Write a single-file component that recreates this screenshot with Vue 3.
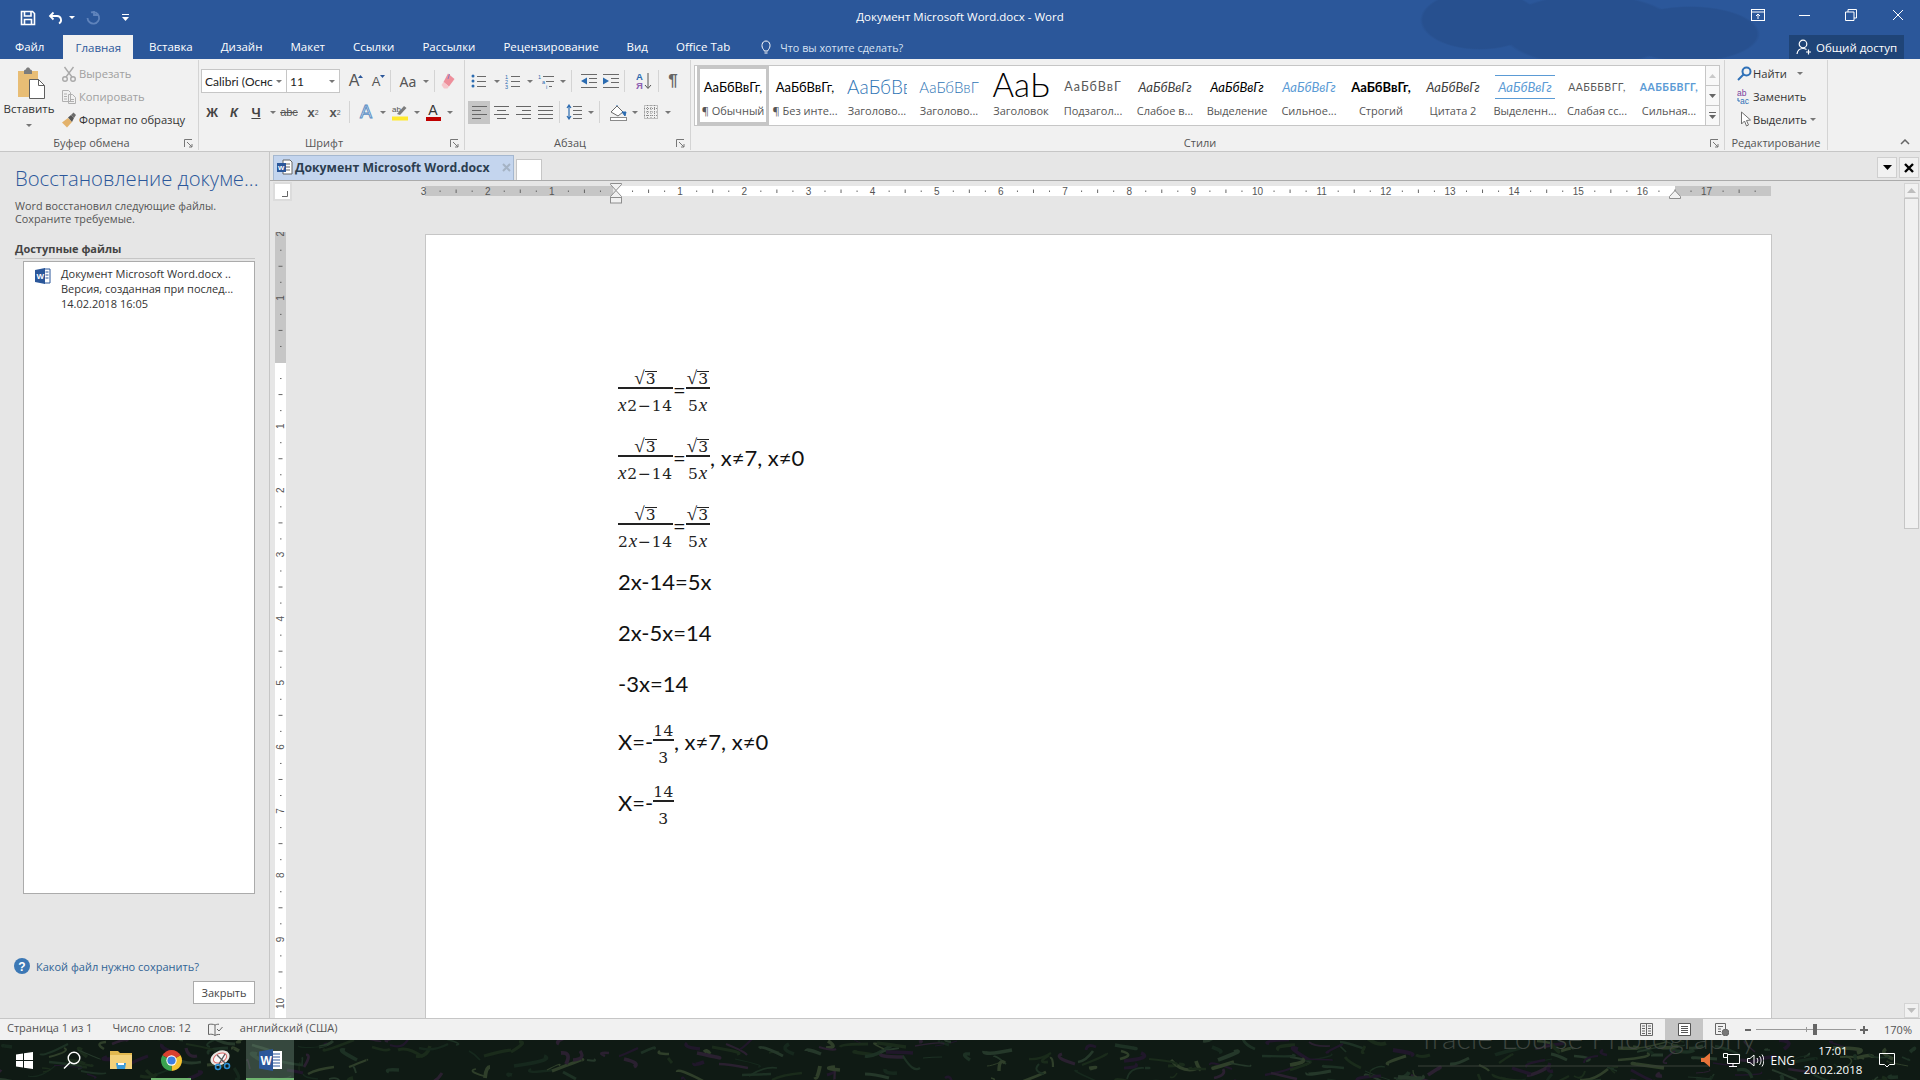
<script setup>
import { computed } from 'vue'

const tabs = ['Файл', 'Главная', 'Вставка', 'Дизайн', 'Макет', 'Ссылки', 'Рассылки', 'Рецензирование', 'Вид', 'Office Tab']

const styles = [
  { text: 'АаБбВвГг,', label: '¶ Обычный', cls: 's-normal', active: true },
  { text: 'АаБбВвГг,', label: '¶ Без инте...', cls: 's-normal' },
  { text: 'АаБбВв', label: 'Заголово...', cls: 's-h1' },
  { text: 'АаБбВвГ', label: 'Заголово...', cls: 's-h2' },
  { text: 'АаЬ', label: 'Заголовок', cls: 's-title' },
  { text: 'АаБбВвГ', label: 'Подзагол...', cls: 's-sub' },
  { text: 'АаБбВвГг', label: 'Слабое в...', cls: 's-it' },
  { text: 'АаБбВвГг', label: 'Выделение', cls: 's-it s-black' },
  { text: 'АаБбВвГг', label: 'Сильное...', cls: 's-it s-blue' },
  { text: 'АаБбВвГг,', label: 'Строгий', cls: 's-normal s-bold' },
  { text: 'АаБбВвГг', label: 'Цитата 2', cls: 's-it' },
  { text: 'АаБбВвГг', label: 'Выделенн...', cls: 's-it s-blue s-lined' },
  { text: 'ААБББВГГ,', label: 'Слабая сс...', cls: 's-caps' },
  { text: 'ААБББВГГ,', label: 'Сильная...', cls: 's-caps s-capsblue' }
]

const PX_PER_CM = 64.15
const H_ZERO = 191
const V_ZERO = 130

// ruler marks: number on whole units, tick on the half, dots in between
const makeMarks = (from, to, zero) => {
  const nums = []
  const ticks = []
  const dots = []
  for (let n = from; n <= to; n++) {
    const p = zero + n * PX_PER_CM
    if (n !== 0) nums.push({ n: Math.abs(n), p })
    ticks.push(p + PX_PER_CM / 2)
    dots.push(p + PX_PER_CM / 4, p + (PX_PER_CM * 3) / 4)
  }
  return { nums, ticks, dots }
}

const hMarks = computed(() => makeMarks(-3, 17, H_ZERO))
const vMarks = computed(() => makeMarks(-2, 10, V_ZERO))

// wallpaper under the taskbar
const blades = computed(() => {
  let seed = 7
  const rnd = () => {
    seed = (seed * 16807) % 2147483647
    return seed / 2147483647
  }
  const colors = ['#1d3124', '#16281d', '#25382a', '#2a2030', '#1a2b1b', '#2f3f2a', '#20172a']
  const list = []
  for (let i = 0; i < 300; i++) {
    const x = rnd() * 1920
    const y = rnd() * 44
    list.push({
      d: `M${x.toFixed(0)} ${y.toFixed(0)}q${(rnd() * 30 - 15).toFixed(0)} ${(rnd() * 10 - 5).toFixed(0)} ${(rnd() * 60 - 30).toFixed(0)} ${(rnd() * 24 - 12).toFixed(0)}`,
      c: colors[Math.floor(rnd() * colors.length)],
      w: (1 + rnd() * 3).toFixed(1)
    })
  }
  return list
})
</script>

<template>
  <div class="app">
    <header class="head">
      <div class="titlebar">
        <div class="qat">
          <svg class="q-save" width="16" height="16" viewBox="0 0 16 16" fill="none" stroke="#fff" stroke-width="1.6"><path d="M1.5 1.5h11l2 2v11h-13z"/><path d="M4.5 1.5V6H11V1.5M4.5 14.5v-5h7v5"/></svg>
          <svg class="q-undo" width="16" height="16" viewBox="0 0 16 16" fill="none" stroke="#fff" stroke-width="1.8"><path d="M5.5 2.5 2 6l3.5 3.5M2.5 6H9a4 4 0 0 1 2 7.5"/></svg>
          <span class="caret caret-white q-caret"></span>
          <svg class="q-redo" width="16" height="16" viewBox="0 0 16 16" fill="none" stroke="#5f83bb" stroke-width="1.8"><path d="M10 2.5a5.8 5.8 0 1 0 3.5 5.5M7 1v4H3" transform="matrix(-1 0 0 1 16 0)"/></svg>
          <svg class="q-more" width="9" height="9" viewBox="0 0 9 9" fill="#fff"><rect x="1" y="1" width="7" height="1"/><path d="M1 4h7L4.5 8z"/></svg>
        </div>
        <div class="doc-title">Документ Microsoft Word.docx - Word</div>
        <div class="win-ctl">
          <svg class="w-display" width="14" height="12" viewBox="0 0 14 12" fill="none" stroke="#fff"><rect x=".5" y=".5" width="13" height="11"/><path d="M.5 3h13M7 10V5M5 7l2-2 2 2"/></svg>
          <svg class="w-min" width="12" height="2" viewBox="0 0 12 2" fill="#fff"><rect width="11" height="1"/></svg>
          <svg class="w-max" width="12" height="12" viewBox="0 0 12 12" fill="none" stroke="#fff"><path d="M3 3V.5h8.5V9H9M.5 3H9v8.5H.5z"/></svg>
          <svg class="w-close" width="12" height="12" viewBox="0 0 12 12" fill="none" stroke="#fff"><path d="M1 1l10 10M11 1L1 11"/></svg>
        </div>
      </div>
      <nav class="tabs">
        <span v-for="t in tabs" :key="t" class="tab" :class="{ 'tab-on': t === 'Главная' }">{{ t }}</span>
        <svg class="lamp" width="12" height="15" viewBox="0 0 12 15" fill="none" stroke="#fff"><path d="M3.5 9.5C1 7 1.5 1 6 1s5 6 2.500 8.5c-.5.5-.7 1-.7 1.500H4.200c0-.5-.2-1-.7-1.500zM4.500 13h3"/></svg>
        <span class="tell-me">Что вы хотите сделать?</span>
        <span class="share">
          <svg width="16" height="16" viewBox="0 0 16 16" fill="none" stroke="#fff" stroke-width="1.2"><circle cx="7" cy="5" r="3.8"/><path d="M1 15c.5-4 3-5.5 6-5.5 1.5 0 2.5.3 3.5 1M12.5 10.5v5M10 13h5"/></svg>
          Общий доступ
        </span>
      </nav>
    </header>

    <section class="ribbon">
      <!-- буфер обмена -->
      <div class="group g-clip">
        <div class="clip-body">
          <div class="paste">
            <svg width="30" height="32" viewBox="0 0 30 32">
              <rect x="1" y="4" width="20" height="26" fill="#e8bd75"/>
              <path d="M7 4c0-1 1-1.5 2-1.5C9 1 10 .5 11 .5s2 .5 2 2c1 0 2 .5 2 1.5v3H7z" fill="#7c7c7c"/>
              <path d="M12.5 12.5h9l6 6v13h-15z" fill="#fff" stroke="#5f5f5f"/>
              <path d="M21.5 12.5v6h6" fill="none" stroke="#5f5f5f"/>
            </svg>
            <span class="paste-text">Вставить</span>
            <span class="caret"></span>
          </div>
          <div class="clip-list">
            <div class="clip-row off">
              <svg width="16" height="16" viewBox="0 0 16 16" fill="none" stroke="#a9a9a9" stroke-width="1.4"><circle cx="4" cy="13" r="2.3"/><circle cx="12" cy="13" r="2.3"/><path d="M5 11 12.5 1M11 11 3.5 1"/></svg>
              Вырезать
            </div>
            <div class="clip-row off">
              <svg width="16" height="16" viewBox="0 0 16 16" fill="none" stroke="#b0b0b0"><path d="M1.5 1.5h6l2 2v9h-8zM7.5 5.5h4l3 3v6h-7zM3 5h3M3 7.500h3M3 10h3M9 10.500h4M9 12.500h4"/></svg>
              Копировать
            </div>
            <div class="clip-row">
              <svg width="16" height="16" viewBox="0 0 16 16"><path d="M1 10.5 7 6l4 4-5 5.5z" fill="#e3b26b"/><path d="M7 5.5 10 3l3 3-2 4z" fill="#565656"/><path d="M10 3l2.5-2.5L15 3l-2 3z" fill="#6d6d6d"/></svg>
              Формат по образцу
            </div>
          </div>
        </div>
        <div class="group-label">Буфер обмена</div>
        <svg class="launcher" width="9" height="9" viewBox="0 0 9 9" fill="none" stroke="#777"><path d="M.5 8V.5H8M3 3l5 5M8 5v3H5"/></svg>
      </div>

      <!-- шрифт -->
      <div class="group g-font">
        <div class="rows">
          <div class="row">
            <span class="combo combo-font"><span class="combo-val">Calibri (Оснс</span><span class="caret"></span></span>
            <span class="combo combo-size"><span class="combo-val">11</span><span class="caret"></span></span>
            <span class="t22 ml3 big-a">A<svg class="tri" width="5" height="3" viewBox="0 0 5 3" fill="#2b579a"><path d="M2.5 0 5 3H0z"/></svg></span>
            <span class="t22 small-a">A<svg class="tri" width="5" height="3" viewBox="0 0 5 3" fill="#2b579a"><path d="M0 0h5L2.5 3z"/></svg></span>
            <i class="sep"></i>
            <span class="aa">Aa</span><span class="caret c11"></span>
            <i class="sep"></i>
            <span class="t22 ml2">
              <svg width="16" height="16" viewBox="0 0 16 16"><path d="M8 .5 14.5 6 9 13.5 3.5 9z" fill="#ee8f9b"/><path d="M3.5 9 9 13.5l-1.5 2H4L1.5 12z" fill="#f6c6cb"/><path d="M9.5 1 8 6" stroke="#8d7cc0" fill="none"/></svg>
            </span>
          </div>
          <div class="row row2">
            <span class="t22 fx fx-b">Ж</span>
            <span class="t22 fx fx-i">К</span>
            <span class="t22 fx fx-u">Ч</span>
            <span class="caret c11"></span>
            <span class="t22 fx-s">abc</span>
            <span class="t22 ml2 fx-x">x<sub>2</sub></span>
            <span class="t22 fx-x">x<sup>2</sup></span>
            <i class="sep"></i>
            <span class="t22 ml5 fx-effect">A</span><span class="caret c11"></span>
            <span class="t22 ml1">
              <svg width="18" height="18" viewBox="0 0 18 18"><text x="1" y="9" class="hl-text">ab</text><path d="M6 11 13 3l2.5 2L9 12z" fill="#7c7c7c"/><rect x="1" y="13.5" width="16" height="4" fill="#ffe92e"/></svg>
            </span>
            <span class="caret c11"></span>
            <span class="t22 fx-color">A<em></em></span><span class="caret c11"></span>
          </div>
        </div>
        <div class="group-label">Шрифт</div>
        <svg class="launcher" width="9" height="9" viewBox="0 0 9 9" fill="none" stroke="#777"><path d="M.5 8V.5H8M3 3l5 5M8 5v3H5"/></svg>
      </div>

      <!-- абзац -->
      <div class="group g-para">
        <div class="rows">
          <div class="row pl2">
            <span class="t22 w24">
              <svg width="16" height="16" viewBox="0 0 16 16" stroke="#6a6a6a"><path d="M6 3.5h9M6 8.5h9M6 13.5h9"/><g fill="#2b6bb0" stroke="none"><circle cx="2" cy="3" r="1.5"/><circle cx="2" cy="8" r="1.5"/><circle cx="2" cy="13" r="1.5"/></g></svg>
            </span><span class="caret c11"></span>
            <span class="t22">
              <svg width="16" height="16" viewBox="0 0 16 16" stroke="#6a6a6a"><path d="M6 3.5h9M6 8.5h9M6 13.5h9"/><g class="num-ico"><text x="0" y="5.5">1</text><text x="0" y="10.5">2</text><text x="0" y="15.5">3</text></g></svg>
            </span><span class="caret c11"></span>
            <span class="t22">
              <svg width="17" height="16" viewBox="0 0 17 16" stroke="#6a6a6a"><path d="M5 3.5h11M8 8.5h8M11 13.5h3"/><g class="num-ico"><text x="0" y="5.5">1</text><text x="4" y="10.5">a</text><text x="8" y="15.5">i</text></g></svg>
            </span><span class="caret c11"></span>
            <i class="sep ml5"></i>
            <span class="t22 ml5">
              <svg width="17" height="14" viewBox="0 0 17 14" stroke="#6a6a6a"><path d="M1 .5h16M9 4.5h8M9 8.5h8M1 13.5h16"/><path d="M7 3.5v7L1 7z" fill="#2b6bb0" stroke="none"/></svg>
            </span>
            <span class="t22">
              <svg width="17" height="14" viewBox="0 0 17 14" stroke="#6a6a6a"><path d="M1 .5h16M9 4.5h8M9 8.5h8M1 13.5h16"/><path d="M1 3.5v7L7 7z" fill="#2b6bb0" stroke="none"/></svg>
            </span>
            <i class="sep"></i>
            <span class="t22 ml8 sort">
              <svg width="16" height="18" viewBox="0 0 16 18"><text x="0" y="8" class="sort-a">А</text><text x="0" y="17" class="sort-z">Я</text><path d="M12 1v15M9 13l3 3.5 3-3.5" fill="none" stroke="#555"/></svg>
            </span>
            <i class="sep ml3"></i>
            <span class="t22 ml3 pilcrow">¶</span>
          </div>
          <div class="row row2 pl3">
            <span class="t22 al-on">
              <svg width="15" height="13" viewBox="0 0 15 13" stroke="#666"><path d="M0 .5h15M0 4.5h9M0 8.5h15M0 12.5h9"/></svg>
            </span>
            <span class="t22"><svg width="15" height="13" viewBox="0 0 15 13" stroke="#666"><path d="M0 .5h15M3 4.5h9M0 8.5h15M3 12.5h9"/></svg></span>
            <span class="t22"><svg width="15" height="13" viewBox="0 0 15 13" stroke="#666"><path d="M0 .5h15M6 4.5h9M0 8.5h15M6 12.5h9"/></svg></span>
            <span class="t22"><svg width="15" height="13" viewBox="0 0 15 13" stroke="#666"><path d="M0 .5h15M0 4.5h15M0 8.5h15M0 12.5h15"/></svg></span>
            <i class="sep ml5"></i>
            <span class="t22 ml3">
              <svg width="16" height="16" viewBox="0 0 16 16" stroke="#6a6a6a" fill="none"><path d="M7 2.5h9M7 6.5h9M7 10.5h9M7 14.5h9"/><path d="M3 1v14M1 4l2-3 2 3M1 12l2 3 2-3" stroke="#2b6bb0" stroke-width="1.2"/></svg>
            </span><span class="caret c11"></span>
            <i class="sep"></i>
            <span class="t22 ml7">
              <svg width="17" height="17" viewBox="0 0 17 17" fill="none"><path d="M1 8 7 2l6 6-5 4z" fill="#fff" stroke="#6a6a6a"/><path d="M7 2V1M12 8h4l-1 4z" fill="#2b6bb0" stroke="#2b6bb0"/><rect x=".5" y="13.5" width="16" height="3" stroke="#8a8a8a" fill="#fff"/></svg>
            </span><span class="caret c11"></span>
            <span class="t22">
              <svg width="14" height="14" viewBox="0 0 14 14" fill="none" stroke="#8d8d8d" stroke-dasharray="1 1"><rect x=".5" y=".5" width="13" height="13"/><path d="M7 0v14M0 7h14M3.5 0v14M10.5 0v14M0 3.5h14M0 10.5h14"/></svg>
            </span><span class="caret c11"></span>
          </div>
        </div>
        <div class="group-label">Абзац</div>
        <svg class="launcher" width="9" height="9" viewBox="0 0 9 9" fill="none" stroke="#777"><path d="M.5 8V.5H8M3 3l5 5M8 5v3H5"/></svg>
      </div>

      <!-- стили -->
      <div class="group g-styles">
        <div class="gallery-wrap">
          <div class="gallery">
            <div v-for="(s, i) in styles" :key="i" class="style-cell" :class="{ 'style-on': s.active }">
              <div class="style-prev"><span :class="s.cls">{{ s.text }}</span></div>
              <div class="style-name">{{ s.label }}</div>
            </div>
          </div>
          <div class="gal-scroll">
            <span class="gal-btn gal-disabled"><svg width="7" height="4" viewBox="0 0 7 4" fill="#c9c9c9"><path d="M3.5 0 7 4H0z"/></svg></span>
            <span class="gal-btn"><svg width="7" height="4" viewBox="0 0 7 4" fill="#666"><path d="M0 0h7L3.5 4z"/></svg></span>
            <span class="gal-btn"><svg width="7" height="7" viewBox="0 0 7 7" fill="#666"><rect width="7" height="1"/><path d="M0 3h7L3.5 7z"/></svg></span>
          </div>
        </div>
        <div class="group-label">Стили</div>
        <svg class="launcher" width="9" height="9" viewBox="0 0 9 9" fill="none" stroke="#777"><path d="M.5 8V.5H8M3 3l5 5M8 5v3H5"/></svg>
      </div>

      <!-- редактирование -->
      <div class="group g-edit">
        <div class="edit-list">
          <div class="edit-row">
            <svg width="15" height="15" viewBox="0 0 15 15" fill="none" stroke="#2f71b8" stroke-width="2"><circle cx="9.5" cy="5.5" r="4"/><path d="M6.5 8.5 1 14"/></svg>
            <span>Найти</span><span class="caret c-find"></span>
          </div>
          <div class="edit-row">
            <svg width="15" height="17" viewBox="0 0 15 17"><text x="0" y="7.5" class="rep-ab">ab</text><text x="3" y="16" class="rep-ac">ac</text><path d="M1 10v3h2" fill="none" stroke="#2f71b8"/></svg>
            <span>Заменить</span>
          </div>
          <div class="edit-row">
            <svg width="15" height="17" viewBox="0 0 15 17" fill="#fff" stroke="#6f6f6f"><path d="M4.5 1v12l3-3 2 5 2-1-2-4.5 4-.5z"/></svg>
            <span>Выделить</span><span class="caret"></span>
          </div>
        </div>
        <div class="group-label">Редактирование</div>
      </div>

      <svg class="collapse" width="10" height="6" viewBox="0 0 10 6" fill="none" stroke="#666" stroke-width="1.5"><path d="M1 5l4-4 4 4"/></svg>
    </section>

    <main class="main">
      <aside class="pane">
        <h2 class="pane-title">Восстановление докуме...</h2>
        <p class="pane-note">Word восстановил следующие файлы.<br />Сохраните требуемые.</p>
        <h3 class="pane-sub">Доступные файлы</h3>
        <div class="file-box">
          <div class="file-item">
            <svg class="file-ico" width="16" height="16" viewBox="0 0 16 16"><path d="M9 1h6v14H9z" fill="#fff" stroke="#2b579a"/><path d="M10.5 4h3M10.5 7h3M10.5 10h3" stroke="#2b579a"/><path d="M0 2l10-2v16L0 14z" fill="#2b579a"/><text x="1.5" y="10.5" class="ico-w">W</text></svg>
            <div class="file-text">
              <div>Документ Microsoft Word.docx ..</div>
              <div>Версия, созданная при послед...</div>
              <div>14.02.2018 16:05</div>
            </div>
          </div>
        </div>
        <div class="help">
          <svg width="16" height="16" viewBox="0 0 16 16"><circle cx="8" cy="8" r="8" fill="#3c78b5"/><text x="8" y="12.5" text-anchor="middle" class="help-q">?</text></svg>
          <span>Какой файл нужно сохранить?</span>
        </div>
        <div class="close-wrap"><button class="close-btn">Закрыть</button></div>
      </aside>

      <div class="work">
        <div class="tabbar">
          <div class="doc-tab">
            <svg width="17" height="17" viewBox="0 0 17 17"><path d="M7 1h7l2 2v12H7z" fill="#fff" stroke="#666"/><path d="M9 5h5M9 8h5M9 11h5" stroke="#666"/><rect x="1" y="4" width="9" height="9" fill="#2b579a"/><text x="2" y="11" class="tab-w">w</text></svg>
            <span>Документ Microsoft Word.docx</span>
            <svg class="doc-tab-x" width="9" height="9" viewBox="0 0 9 9" stroke="#a5b3c4" stroke-width="2"><path d="M1 1l7 7M8 1L1 8"/></svg>
          </div>
          <div class="new-tab"></div>
          <span class="bar-btn bar-first"><svg width="9" height="5" viewBox="0 0 9 5"><path d="M0 0h9L4.5 5z"/></svg></span>
          <span class="bar-btn bar-last"><svg width="10" height="10" viewBox="0 0 10 10" stroke="#000" stroke-width="2.4"><path d="M1 1l8 8M9 1L1 9"/></svg></span>
        </div>
        <div class="work-body">
          <div class="doc-col">
            <div class="hruler-row">
              <span class="corner"><svg width="6" height="6" viewBox="0 0 6 6" fill="none" stroke="#666"><path d="M5.5 0v5.5H0"/></svg></span>
              <svg class="hruler" width="1346" height="22" viewBox="0 0 1346 22">
                <rect x="0" y="5" width="188" height="10" fill="#c6c6c6"/>
                <rect x="191" y="5" width="1059" height="10" fill="#fff"/>
                <rect x="1250" y="5" width="96" height="10" fill="#c6c6c6"/>
                <g class="r-num">
                  <text v-for="m in hMarks.nums" :key="m.p" :x="m.p" y="13.5" text-anchor="middle">{{ m.n }}</text>
                </g>
                <g fill="#666">
                  <rect v-for="p in hMarks.ticks" :key="'t' + p" :x="p" y="8.5" width="1" height="3.5" />
                  <rect v-for="p in hMarks.dots" :key="'d' + p" :x="p" y="9.5" width="1" height="1.5" />
                </g>
                <g fill="#f1f1f1" stroke="#8d8d8d">
                  <path d="M185.5 2.5h11v1l-5.5 6-5.5-6z"/>
                  <path d="M191 9.5l5.5 6v1h-11v-1z"/>
                  <rect x="185.5" y="16.5" width="11" height="5.5"/>
                  <path d="M1250 9.5l5.5 6v2h-11v-2z"/>
                </g>
              </svg>
            </div>
            <div class="doc-row">
              <svg class="vruler" width="11" height="786" viewBox="0 0 11 786">
                <rect width="11" height="131" fill="#c6c6c6"/>
                <rect y="131" width="11" height="655" fill="#fff"/>
                <g class="r-num">
                  <text v-for="m in vMarks.nums" :key="m.p" :transform="`translate(9 ${m.p}) rotate(-90)`" text-anchor="middle">{{ m.n }}</text>
                </g>
                <g fill="#666">
                  <rect v-for="p in vMarks.ticks" :key="'vt' + p" x="3.5" :y="p" width="4" height="1" />
                  <rect v-for="p in vMarks.dots" :key="'vd' + p" x="5" :y="p" width="1.5" height="1" />
                </g>
              </svg>
              <article class="page">
                <div class="eq math-row first">
                  <span class="frac"><span class="num"><span class="root">√<span class="rad">3</span></span></span><span class="den"><i>x</i>2−14</span></span>
                  <span class="eq-sign">=</span>
                  <span class="frac"><span class="num"><span class="root">√<span class="rad">3</span></span></span><span class="den">5<i>x</i></span></span>
                </div>
                <div class="eq math-row">
                  <span class="frac"><span class="num"><span class="root">√<span class="rad">3</span></span></span><span class="den"><i>x</i>2−14</span></span>
                  <span class="eq-sign">=</span>
                  <span class="frac"><span class="num"><span class="root">√<span class="rad">3</span></span></span><span class="den">5<i>x</i></span></span>
                  <span class="tail">, x≠7, x≠0</span>
                </div>
                <div class="eq math-row third">
                  <span class="frac"><span class="num"><span class="root">√<span class="rad">3</span></span></span><span class="den">2<i>x</i>−14</span></span>
                  <span class="eq-sign">=</span>
                  <span class="frac"><span class="num"><span class="root">√<span class="rad">3</span></span></span><span class="den">5<i>x</i></span></span>
                </div>
                <div class="eq text-row">2x-14=5x</div>
                <div class="eq text-row">2x-5x=14</div>
                <div class="eq text-row">-3x=14</div>
                <div class="eq x-row">
                  <span>X=-</span>
                  <span class="frac frac-small"><span class="num">14</span><span class="den">3</span></span>
                  <span>, x≠7, x≠0</span>
                </div>
                <div class="eq x-row">
                  <span>X=-</span>
                  <span class="frac frac-small"><span class="num">14</span><span class="den">3</span></span>
                </div>
              </article>
            </div>
          </div>
          <div class="scrollbar">
            <span class="sb-up"><svg width="9" height="5" viewBox="0 0 9 5" fill="#bdbdbd"><path d="M4.5 0 9 5H0z"/></svg></span>
            <span class="sb-thumb"></span>
            <span class="sb-space"></span>
            <span class="sb-down"><svg width="9" height="5" viewBox="0 0 9 5" fill="#bdbdbd"><path d="M0 0h9L4.5 5z"/></svg></span>
          </div>
        </div>
      </div>
    </main>

    <footer class="status">
      <span class="st-page">Страница 1 из 1</span>
      <span class="st-words">Число слов: 12</span>
      <svg class="st-proof" width="15" height="14" viewBox="0 0 15 14" fill="none" stroke="#666"><path d="M7 2C5 1 3 1 .5 1.5v10C3 11 5 11 7 12.5zM7 2c1-.5 2-.8 4-.8M7 12.5c1-.7 2.5-1.200 5-1M9 6l2 2 3.5-4"/></svg>
      <span class="st-lang">английский (США)</span>
      <div class="st-right">
        <svg class="st-v1" width="13" height="13" viewBox="0 0 13 13" fill="none" stroke="#666"><path d="M.5.5h12v12H.5zM6.5.5v12M2 3h3M2 5.5h3M2 8h3M2 10.5h3M8 3h3M8 5.5h3M8 8h3M8 10.5h3"/></svg>
        <span class="st-v2"><svg width="13" height="13" viewBox="0 0 13 13" fill="#fff" stroke="#555"><path d="M.5.5h12v12H.5zM3 3.5h7M3 5.5h7M3 7.5h7M3 9.5h7"/></svg></span>
        <svg class="st-v3" width="14" height="13" viewBox="0 0 14 13" fill="none" stroke="#666"><path d="M.5.5h10v8M.5.5v11h6M3 3.5h5M3 6h3M3 8.5h3"/><circle cx="10.5" cy="9.5" r="3.3" fill="#777"/></svg>
        <span class="zoom-minus"></span>
        <span class="zoom-track"><i class="zoom-mid"></i><i class="zoom-thumb"></i></span>
        <span class="zoom-plus"></span>
        <span class="zoom-val">170%</span>
      </div>
    </footer>

    <footer class="taskbar">
      <svg class="wall" width="1920" height="40" viewBox="0 0 1920 40" fill="none">
        <path v-for="(b, i) in blades" :key="i" :d="b.d" :stroke="b.c" :stroke-width="b.w"/>
        <path d="M1418 26h292" stroke="#3a4139"/>
      </svg>
      <span class="watermark">Tracie Louise Photography</span>

      <span class="task-btn w48">
        <svg width="17" height="17" viewBox="0 0 17 17" fill="#fff"><path d="M0 2.5 7 1.5V8H0zM8 1.3 17 0v8H8zM0 9h7v6.5L0 14.5zM8 9h9v8l-9-1.3z"/></svg>
      </span>
      <span class="task-btn w48">
        <svg width="18" height="18" viewBox="0 0 18 18" fill="none" stroke="#fff" stroke-width="1.4"><circle cx="11" cy="7" r="5.8"/><path d="M7 11.5 1 17.5"/></svg>
      </span>
      <span class="task-btn w50">
        <svg width="22" height="18" viewBox="0 0 22 18"><path d="M0 0h8l2 2h12v4H0z" fill="#e2b84f"/><path d="M0 4h22v14H0z" fill="#f3d17a"/><path d="M6 12h10l-1 6H7z" fill="#3a9bd9"/><path d="M8 12h6v2H8z" fill="#fff"/></svg>
      </span>
      <span class="task-btn w50 running">
        <svg width="23" height="23" viewBox="0 0 24 24">
          <path d="M2.5 6.5A11 11 0 0 1 21.5 6.5L12 12z" fill="#d9412f"/>
          <path d="M21.5 6.5A11 11 0 0 1 12 23V12z" fill="#f4c331"/>
          <path d="M12 23A11 11 0 0 1 2.5 6.5L12 12z" fill="#3aa24f"/>
          <circle cx="12" cy="12" r="5.4" fill="#fff"/>
          <circle cx="12" cy="12" r="4.3" fill="#3d7ee0"/>
        </svg>
      </span>
      <span class="task-btn w50">
        <svg width="24" height="22" viewBox="0 0 24 22"><ellipse cx="11" cy="9" rx="10" ry="7" fill="#e9e6e2" transform="rotate(-25 11 9)"/><ellipse cx="11" cy="9" rx="7" ry="4.5" fill="#f8f8f8" stroke="#d66" transform="rotate(-25 11 9)"/><path d="M8 6l9 9M16 5l-6 10" stroke="#5c5c5c" stroke-width="1.4"/><circle cx="18" cy="17" r="2.5" fill="none" stroke="#2b8fd6" stroke-width="1.6"/><circle cx="9" cy="18" r="2.5" fill="none" stroke="#2b8fd6" stroke-width="1.6"/></svg>
      </span>
      <span class="task-btn w48 running active">
        <svg width="23" height="22" viewBox="0 0 23 22"><rect x="11" y="2" width="12" height="18" fill="#fff"/><path d="M13 5h8M13 8h8M13 11h8M13 14h8M13 17h8" stroke="#2b579a"/><path d="M0 2.5 14 0v22L0 19.5z" fill="#2b579a"/><text x="1.5" y="15.5" class="bar-w">W</text></svg>
      </span>

      <div class="tray">
        <svg class="tr-spk" width="10" height="14" viewBox="0 0 10 14"><path d="M0 5h3l6-5v14l-6-5H0z" fill="#e8743a"/></svg>
        <svg class="tr-net" width="17" height="15" viewBox="0 0 17 15" fill="none" stroke="#fff"><path d="M4.5 1.5h12v9h-12zM10 10.5v3M6 13.5h8M.5.5h4v4h-4z"/></svg>
        <svg class="tr-vol" width="17" height="13" viewBox="0 0 17 13" fill="none" stroke="#fff"><path d="M.5 4.5H3L7 1v11L3 8.5H.5zM10 4c1 1.5 1 3.5 0 5M12.5 2c2 3 2 6 0 9M15 .5c2.5 4 2.5 8 0 12"/></svg>
        <span class="tr-lang">ENG</span>
        <div class="tr-clock"><div>17:01</div><div>20.02.2018</div></div>
        <svg class="tr-note" width="16" height="15" viewBox="0 0 16 15" fill="none" stroke="#fff"><path d="M.5.5h15v11h-5L8 14l-2.5-2.5H.5z"/></svg>
      </div>
    </footer>
  </div>
</template>

<style>
html,
body {
  margin: 0;
  background: #e6e6e6;
}
</style>

<style scoped>
.app {
  width: 1920px;
  height: 1080px;
  display: flex;
  flex-direction: column;
  overflow: hidden;
  font-family: 'Open Sans', 'Noto Sans', sans-serif;
  font-size: 11px;
  color: #444;
}
svg {
  flex-shrink: 0;
  display: block;
}
.caret {
  display: inline-block;
  width: 0;
  height: 0;
  border-left: 3px solid transparent;
  border-right: 3px solid transparent;
  border-top: 3px solid #777;
}
.caret-white {
  border-top-color: #fff;
}

/* title */
.head {
  background-color: #2b579a;
  background-image:
    radial-gradient(ellipse 60px 30px at 1480px 20px, #27508f 0 95%, transparent 100%),
    radial-gradient(ellipse 90px 36px at 1590px 30px, #27508f 0 95%, transparent 100%),
    radial-gradient(ellipse 70px 28px at 1690px 34px, #27508f 0 95%, transparent 100%);
  color: #fff;
}
.titlebar {
  height: 35px;
  display: flex;
  align-items: center;
}
.qat {
  display: flex;
  align-items: center;
  padding-left: 20px;
  width: 400px;
  box-sizing: border-box;
  height: 32px;
}
.q-undo {
  margin-left: 12px;
}
.q-caret {
  margin-left: 5px;
}
.q-redo {
  margin-left: 10px;
}
.q-more {
  margin-left: 20px;
}
.doc-title {
  flex: 1;
  text-align: center;
  font-size: 11.5px;
  margin-top: -3px;
}
.win-ctl {
  width: 400px;
  display: flex;
  align-items: center;
  justify-content: flex-end;
  margin-top: -5px;
  padding-right: 16px;
  box-sizing: border-box;
}
.w-display {
  margin-right: 34px;
}
.w-min {
  margin-right: 34px;
  margin-top: 1px;
}
.w-max {
  margin-right: 35px;
}
.tabs {
  height: 24px;
  display: flex;
  align-items: stretch;
}
.tab {
  padding: 0 14px;
  display: flex;
  align-items: center;
  font-size: 11.5px;
  color: #fff;
  margin-top: -1px;
}
.tab:first-child {
  padding: 0 19px 0 15px;
}
.tab-on {
  padding: 0 12px;
  margin-top: 0;
  background: #f1f1f1;
  color: #2b579a;
}
.tab-on + .tab {
  padding-left: 16px;
}
.lamp {
  align-self: center;
  margin-left: 16px;
}
.tell-me {
  align-self: center;
  margin-left: 8px;
  color: #d7e2f2;
  font-size: 10.8px;
}
.share {
  margin-left: auto;
  margin-right: 16px;
  width: 115px;
  box-sizing: border-box;
  background: #1f4477;
  display: flex;
  align-items: center;
  gap: 4px;
  padding-left: 7px;
  font-size: 11.5px;
  white-space: nowrap;
}

/* ribbon */
.ribbon {
  height: 92px;
  background: #f1f1f1;
  border-bottom: 1px solid #c6c6c6;
  display: flex;
  position: relative;
}
.group {
  position: relative;
  display: flex;
  flex-direction: column;
  height: 90px;
  margin-top: 1px;
  border-right: 1px solid #d4d4d4;
  box-sizing: border-box;
}
.group-label {
  position: absolute;
  left: 0;
  right: 15px;
  bottom: -2px;
  height: 18px;
  line-height: 18px;
  text-align: center;
  color: #555;
  font-size: 11px;
}
.launcher {
  position: absolute;
  right: 5px;
  bottom: 2px;
}
.g-clip {
  width: 199px;
}
.g-font {
  width: 266px;
}
.g-para {
  width: 226px;
}
.g-styles {
  width: 1034px;
}
.g-edit {
  width: 103px;
}
.g-edit .group-label {
  right: 0;
}
.collapse {
  position: absolute;
  right: 10px;
  bottom: 6px;
}
.clip-body {
  display: flex;
}
.paste {
  width: 59px;
  display: flex;
  flex-direction: column;
  align-items: center;
  padding-top: 7px;
  padding-left: 5px;
  box-sizing: border-box;
  color: #333;
  font-size: 11.5px;
}
.paste-text {
  margin-top: 2px;
  margin-left: -6px;
}
.paste .caret {
  margin-top: 8px;
  margin-left: -6px;
}
.clip-list {
  padding-top: 2px;
}
.clip-row {
  height: 23px;
  display: flex;
  align-items: center;
  gap: 2px;
  margin-left: 2px;
  white-space: nowrap;
  color: #333;
  font-size: 11.2px;
}
.clip-row.off {
  color: #a0a0a0;
}
.rows {
  padding-top: 9px;
}
.row {
  height: 24px;
  display: flex;
  align-items: center;
}
.row2 {
  margin-top: 7px;
}
.g-font .row {
  padding-left: 2px;
}
.pl2 {
  padding-left: 2px;
}
.pl3 {
  padding-left: 3px;
}
.t22 {
  width: 22px;
  height: 23px;
  display: flex;
  align-items: center;
  justify-content: center;
  position: relative;
  flex-shrink: 0;
}
.w24 {
  width: 24px;
}
.c11 {
  margin: 0 2.5px;
  flex-shrink: 0;
}
.ml1 {
  margin-left: 1px;
}
.ml2 {
  margin-left: 2px;
}
.ml3 {
  margin-left: 3px;
}
.ml5 {
  margin-left: 5px;
}
.ml7 {
  margin-left: 7px;
}
.ml8 {
  margin-left: 8px;
}
.sep {
  width: 1px;
  height: 22px;
  background: #d4d4d4;
  flex-shrink: 0;
  margin-left: 3px;
}
.combo {
  height: 24px;
  box-sizing: border-box;
  background: #fff;
  border: 1px solid #c6c6c6;
  display: flex;
  align-items: center;
  justify-content: space-between;
  padding: 0 4px 0 3px;
  font-family: Lato, sans-serif;
  font-size: 12px;
  color: #222;
  overflow: hidden;
}
.combo-font {
  width: 86px;
}
.combo-size {
  width: 54px;
  margin-left: -1px;
}
.combo-val {
  white-space: nowrap;
  overflow: hidden;
}
.big-a,
.small-a {
  font-family: 'Liberation Sans', sans-serif;
  color: #555;
}
.big-a {
  font-size: 16px;
}
.small-a {
  font-size: 13px;
}
.tri {
  position: absolute;
  top: 5px;
  right: 2px;
}
.aa {
  width: 24px;
  margin-left: 5px;
  text-align: center;
  font-size: 14px;
  color: #555;
  font-family: 'Noto Sans', sans-serif;
}
.fx {
  font-family: 'Liberation Sans', sans-serif;
  font-weight: 700;
  font-size: 13px;
  color: #444;
}
.fx-i {
  font-style: italic;
}
.fx-u {
  text-decoration: underline;
}
.fx-s {
  text-decoration: line-through;
  font-size: 11px;
  font-family: 'Liberation Sans', sans-serif;
  color: #555;
}
.fx-x {
  font-family: 'Liberation Sans', sans-serif;
  font-weight: 700;
  font-size: 13px;
  color: #555;
}
.fx-x sub,
.fx-x sup {
  font-size: 7px;
  font-weight: 400;
}
.fx-effect {
  font-family: 'Liberation Sans', sans-serif;
  font-size: 18px;
  color: #fff;
  -webkit-text-stroke: 1px #5b8ec4;
}
.fx-color {
  flex-direction: column;
  font-family: 'Liberation Sans', sans-serif;
  font-size: 14px;
  line-height: 14px;
  color: #333;
}
.fx-color em {
  display: block;
  width: 15px;
  height: 4px;
  background: #c00000;
}
.hl-text {
  font: 8px 'Liberation Sans', sans-serif;
  fill: #555;
}
.num-ico {
  font: 5.5px 'Liberation Sans', sans-serif;
  fill: #2b6bb0;
  stroke: none;
}
.sort-a {
  font: 700 9.5px 'Liberation Sans', sans-serif;
  fill: #2b6bb0;
}
.sort-z {
  font: 700 9.5px 'Liberation Sans', sans-serif;
  fill: #8d5fb3;
}
.pilcrow {
  font-family: 'Liberation Sans', sans-serif;
  font-size: 17px;
  font-weight: 700;
  color: #666;
}
.al-on {
  background: #c6c6c6;
}

/* gallery */
.gallery-wrap {
  display: flex;
  margin-top: 5px;
  margin-left: 3px;
}
.gallery {
  width: 1012px;
  height: 61px;
  box-sizing: border-box;
  display: flex;
  background: #fff;
  border: 1px solid #c6c6c6;
  padding-left: 2px;
  overflow: hidden;
}
.style-cell {
  width: 72px;
  flex-shrink: 0;
  height: 59px;
  box-sizing: border-box;
  text-align: center;
  overflow: hidden;
  padding-top: 4px;
}
.style-on {
  border: 3px solid #c6c6c6;
  padding-top: 1px;
}
.style-prev {
  height: 33px;
  display: flex;
  align-items: center;
  justify-content: center;
  white-space: nowrap;
  overflow: hidden;
  font-family: Lato, sans-serif;
  font-size: 13px;
  color: #000;
}
.style-name {
  font-size: 11px;
  color: #555;
  white-space: nowrap;
  line-height: 15px;
  overflow: hidden;
}
.s-bold {
  font-weight: 700;
}
.s-h1 {
  display: block;
  width: 60px;
  overflow: hidden;
  text-align: left;
  font-size: 19px;
  font-weight: 300;
  color: #2e74b5;
}
.s-h2 {
  font-size: 15px;
  font-weight: 300;
  color: #2e74b5;
}
.s-title {
  font-size: 33px;
  font-weight: 300;
  color: #000;
  margin-top: -6px;
}
.s-sub {
  color: #5a5a5a;
  letter-spacing: 1px;
  font-size: 12.5px;
}
.s-it {
  display: block;
  width: 60px;
  overflow: hidden;
  font-style: italic;
  color: #404040;
  font-size: 13px;
}
.s-black {
  color: #000;
}
.s-blue {
  color: #5b9bd5;
}
.s-lined {
  border-top: 1px solid #5b9bd5;
  border-bottom: 1px solid #5b9bd5;
  padding: 3px 0;
}
.s-caps {
  font-size: 10.5px;
  color: #5a5a5a;
  letter-spacing: 0.5px;
}
.s-capsblue {
  color: #5b9bd5;
  font-weight: 700;
}
.gal-scroll {
  width: 15px;
  display: flex;
  flex-direction: column;
  margin-left: -1px;
}
.gal-btn {
  height: 21px;
  margin-top: -1px;
  box-sizing: border-box;
  border: 1px solid #c6c6c6;
  background: #f8f8f8;
  display: flex;
  align-items: center;
  justify-content: center;
}
.gal-btn:first-child {
  margin-top: 0;
}
.edit-list {
  padding: 2px 0 0 12px;
}
.edit-row {
  height: 23px;
  display: flex;
  align-items: center;
  gap: 1px;
  color: #333;
  font-size: 11.2px;
}
.edit-row .caret {
  margin-left: 2px;
}
.edit-row .c-find {
  margin-left: 9px;
}
.rep-ab {
  font: 8.5px 'Liberation Sans', sans-serif;
  fill: #7a3f9d;
}
.rep-ac {
  font: 8.5px 'Liberation Sans', sans-serif;
  fill: #2f71b8;
}

/* main */
.main {
  height: 866px;
  display: flex;
  background: #e6e6e6;
}
.pane {
  width: 270px;
  box-sizing: border-box;
  border-right: 1px solid #c6c6c6;
  display: flex;
  flex-direction: column;
  flex-shrink: 0;
  padding: 0 14px 0 15px;
}
.pane-title {
  margin: 12px 0 0;
  font-size: 20.3px;
  font-weight: 300;
  line-height: 28px;
  color: #2b579a;
  white-space: nowrap;
}
.pane-note {
  margin: 7px 0 0;
  font-size: 10.8px;
  line-height: 13px;
  color: #555;
}
.pane-sub {
  margin: 16px 0 0;
  font-size: 11px;
  font-weight: 700;
  line-height: 16px;
  color: #444;
  border-bottom: 1px solid #c6c6c6;
  padding-bottom: 1px;
}
.file-box {
  margin: 2px 0 0 8px;
  height: 633px;
  border: 1px solid #ababab;
  background: #fff;
  box-sizing: border-box;
}
.file-item {
  display: flex;
  padding: 4px 0 0 11px;
  gap: 10px;
}
.file-ico {
  margin-top: 2px;
}
.file-text {
  font-size: 11px;
  line-height: 15px;
  color: #333;
  white-space: nowrap;
}
.ico-w {
  font: 700 8px 'Liberation Sans', sans-serif;
  fill: #fff;
}
.help {
  display: flex;
  align-items: center;
  gap: 6px;
  margin-top: 64px;
  margin-left: -1px;
  color: #2f6395;
  font-size: 11px;
  white-space: nowrap;
}
.help-q {
  font: 700 12px 'Liberation Sans', sans-serif;
  fill: #fff;
}
.close-wrap {
  display: flex;
  justify-content: flex-end;
  margin-top: 7px;
}
.close-btn {
  width: 62px;
  height: 23px;
  padding: 0;
  background: #fff;
  border: 1px solid #ababab;
  font: 11px 'Open Sans', sans-serif;
  color: #444;
}
.work {
  flex: 1;
  display: flex;
  flex-direction: column;
  min-width: 0;
}
.tabbar {
  height: 29px;
  box-sizing: border-box;
  border-bottom: 1px solid #ababab;
  display: flex;
  align-items: flex-end;
  padding-left: 3px;
  background: #e6e6e6;
}
.doc-tab {
  width: 241px;
  height: 25px;
  box-sizing: border-box;
  display: flex;
  align-items: center;
  gap: 2px;
  padding: 0 0 2px 2px;
  background: #c4d5ee;
  border: 1px solid #a5b8d0;
  border-bottom: 0;
  font-size: 12.3px;
  font-weight: 700;
  color: #2c3e50;
  white-space: nowrap;
}
.tab-w {
  font: 700 8px 'Liberation Sans', sans-serif;
  fill: #fff;
}
.doc-tab-x {
  margin-left: 10px;
}
.new-tab {
  width: 26px;
  height: 21px;
  margin-left: 2px;
  background: #fff;
  box-sizing: border-box;
  border: 1px solid #c6c6c6;
  border-bottom: 0;
}
.bar-btn {
  width: 20px;
  height: 21px;
  box-sizing: border-box;
  background: #f1f1f1;
  border: 1px solid #cfcfcf;
  display: flex;
  align-items: center;
  justify-content: center;
  margin-bottom: 2px;
  margin-left: 2px;
}
.bar-first {
  margin-left: auto;
}
.bar-last {
  margin-right: 1px;
}
.work-body {
  flex: 1;
  display: flex;
  min-height: 0;
}
.doc-col {
  flex: 1;
  display: flex;
  flex-direction: column;
  min-width: 0;
}
.hruler-row {
  height: 51px;
  display: flex;
  padding-left: 3px;
  flex-shrink: 0;
}
.corner {
  width: 19px;
  height: 19px;
  box-sizing: border-box;
  border: 2px solid #dcdcdc;
  background: #fff;
  margin-top: 1px;
  display: flex;
  align-items: flex-end;
  justify-content: flex-end;
  padding: 2px;
}
.hruler {
  margin-left: 133px;
  overflow: visible;
}
.r-num {
  font: 10px 'Liberation Sans', sans-serif;
  fill: #555;
}
.doc-row {
  flex: 1;
  display: flex;
  padding-left: 5px;
  min-height: 0;
}
.page {
  width: 1347px;
  margin: 2px 0 0 139px;
  background: #fff;
  box-sizing: border-box;
  border: 1px solid #c6c6c6;
  border-bottom: 0;
  padding-left: 192px;
  flex-shrink: 0;
  color: #111;
  font-family: Lato, sans-serif;
  font-size: 22px;
  overflow: hidden;
}
.eq {
  display: flex;
  align-items: center;
}
.math-row {
  height: 50px;
  margin-bottom: 18px;
}
.first {
  margin-top: 129px;
}
.third {
  margin-bottom: 14px;
}
.text-row {
  height: 34px;
  margin-bottom: 17px;
}
.x-row {
  height: 50px;
  margin-bottom: 12px;
  margin-top: -1px;
}
.frac {
  display: inline-flex;
  flex-direction: column;
  align-items: center;
  font-family: 'DejaVu Serif', serif;
  font-size: 15.5px;
  color: #222;
}
.frac i {
  font-family: 'Liberation Serif', serif;
  font-size: 19px;
  font-style: italic;
}
.num {
  padding: 0 1px;
  border-bottom: 2px solid #222;
  align-self: stretch;
  text-align: center;
  height: 25px;
  line-height: 27px;
  box-sizing: border-box;
}
.den {
  height: 25px;
  line-height: 32px;
  letter-spacing: 0.8px;
  white-space: nowrap;
}
.root {
  font-family: 'Liberation Serif', serif;
  font-size: 19px;
}
.rad {
  display: inline-block;
  font-family: 'DejaVu Serif', serif;
  font-size: 15.5px;
  line-height: 14px;
  padding: 0 1px;
  border-top: 1px solid #222;
}
.frac-small .num {
  letter-spacing: 0.5px;
  padding: 0;
  height: 25px;
  line-height: 30px;
}
.frac-small .den {
  line-height: 34px;
}

/* scrollbar */
.scrollbar {
  width: 15px;
  margin-right: 1px;
  margin-top: 2px;
  display: flex;
  flex-direction: column;
  flex-shrink: 0;
  box-sizing: border-box;
}
.sb-up,
.sb-down {
  height: 15px;
  background: #f1f1f1;
  border: 1px solid #d4d4d4;
  box-sizing: border-box;
  display: flex;
  align-items: center;
  justify-content: center;
  flex-shrink: 0;
}
.sb-thumb {
  height: 331px;
  background: #f0f0f0;
  border: 1px solid #c6c6c6;
  box-sizing: border-box;
}
.sb-space {
  flex: 1;
}

/* status */
.status {
  height: 22px;
  background: #f1f1f1;
  border-top: 1px solid #c6c6c6;
  box-sizing: border-box;
  display: flex;
  align-items: center;
  color: #555;
  font-size: 11px;
  padding-left: 7px;
}
.status > span {
  margin-top: -4px;
}
.st-words {
  margin-left: 20px;
}
.st-proof {
  margin-left: 17px;
}
.st-lang {
  margin-left: 17px;
}
.st-right {
  margin-left: auto;
  display: flex;
  align-items: center;
  align-self: stretch;
}
.st-v2 {
  width: 38px;
  align-self: stretch;
  background: #c6c6c6;
  margin-left: 12px;
  display: flex;
  align-items: center;
  justify-content: center;
}
.st-v3 {
  margin-left: 12px;
}
.zoom-minus {
  width: 6px;
  height: 2px;
  background: #666;
  margin-left: 16px;
}
.zoom-track {
  width: 100px;
  height: 1px;
  background: #9a9a9a;
  margin-left: 5px;
  position: relative;
}
.zoom-mid {
  position: absolute;
  left: 50px;
  top: -2px;
  width: 1px;
  height: 5px;
  background: #9a9a9a;
}
.zoom-thumb {
  position: absolute;
  left: 57px;
  top: -5px;
  width: 4px;
  height: 11px;
  background: #666;
}
.zoom-plus {
  width: 8px;
  height: 8px;
  margin-left: 4px;
  background:
    linear-gradient(#666, #666) center / 8px 2px no-repeat,
    linear-gradient(#666, #666) center / 2px 8px no-repeat;
}
.zoom-val {
  margin-left: 16px;
  margin-right: 8px;
}

/* taskbar */
.taskbar {
  height: 40px;
  position: relative;
  display: flex;
  background-color: #0f1a14;
  color: #fff;
  overflow: hidden;
}
.wall {
  position: absolute;
  left: 0;
  top: 0;
}
.watermark {
  position: absolute;
  left: 1418px;
  top: -21px;
  font-family: Lato, sans-serif;
  font-size: 30px;
  font-weight: 300;
  color: #3d453f;
  white-space: nowrap;
}
.task-btn {
  position: relative;
  height: 40px;
  display: flex;
  align-items: center;
  justify-content: center;
  flex-shrink: 0;
}
.w48 {
  width: 48px;
}
.w50 {
  width: 50px;
}
.running::after {
  content: '';
  position: absolute;
  left: 5px;
  right: 5px;
  bottom: 0;
  height: 2px;
  background: #6fb46f;
}
.active {
  background: rgba(130, 160, 140, 0.35);
}
.active::after {
  left: 0;
  right: 0;
}
.bar-w {
  font: 700 12px 'Liberation Sans', sans-serif;
  fill: #fff;
}
.tray {
  position: relative;
  margin-left: auto;
  display: flex;
  align-items: center;
  padding-right: 25px;
}
.tr-net {
  margin-left: 12px;
}
.tr-vol {
  margin-left: 7px;
}
.tr-lang {
  margin-left: 7px;
  font-size: 12px;
}
.tr-clock {
  width: 66px;
  margin-left: 5px;
  text-align: center;
  font-size: 11.5px;
  line-height: 19px;
}
.tr-note {
  margin-left: 13px;
}
</style>
